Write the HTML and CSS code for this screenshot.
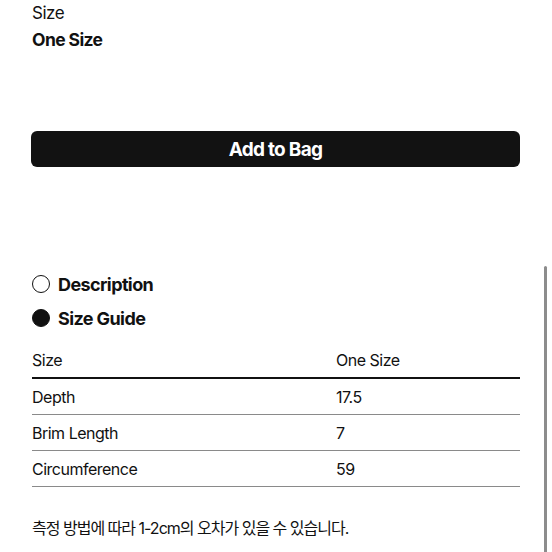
FILE: index.html
```html
<!DOCTYPE html>
<html lang="ko">
<head>
<meta charset="utf-8">
<link rel="stylesheet" href="styles.css">
</head>
<body>
<div class="page">
  <div class="size-block">
    <div class="size-label">Size</div>
    <div class="size-value">One Size</div>
  </div>
  <button class="bag-btn">Add to Bag</button>
  <div class="tabs">
    <div class="tab"><span class="radio"></span><span class="tab-text">Description</span></div>
    <div class="tab"><span class="radio radio-on"></span><span class="tab-text">Size Guide</span></div>
  </div>
  <table class="guide">
    <thead>
      <tr><th>Size</th><th>One Size</th></tr>
    </thead>
    <tbody>
      <tr><td>Depth</td><td>17.5</td></tr>
      <tr><td>Brim Length</td><td>7</td></tr>
      <tr><td>Circumference</td><td>59</td></tr>
    </tbody>
  </table>
  <p class="note">측정 방법에 따라 1-2cm의 오차가 있을 수 있습니다.</p>
</div>
<div class="scrollbar"></div>
</body>
</html>
```
FILE: styles.css
```css
html, body {
  margin: 0;
  padding: 0;
  background: #fff;
}
body {
  font-family: Inter, "Noto Sans CJK KR", sans-serif;
  color: #111;
  width: 552px;
  height: 552px;
  overflow: hidden;
  position: relative;
}
.page {
  padding: 0 32px;
  width: 488px;
}
.size-block {
  padding-top: 1px;
}
.size-label {
  font-size: 17px;
  line-height: 24px;
  letter-spacing: -0.5px;
}
.size-value {
  font-size: 17.5px;
  font-weight: 700;
  line-height: 24px;
  margin-top: 3px;
  letter-spacing: -0.6px;
}
.bag-btn {
  display: block;
  width: 489px;
  height: 36px;
  margin: 79px 0 0 -1px;
  border: none;
  border-radius: 6px;
  background: #121212;
  color: #fff;
  font-family: Inter, sans-serif;
  font-size: 19px;
  font-weight: 700;
  letter-spacing: -0.7px;
  padding: 0;
}
.tabs {
  margin-top: 105px;
  display: flex;
  flex-direction: column;
  gap: 10px;
}
.tab {
  display: flex;
  align-items: center;
  gap: 8px;
  height: 24px;
}
.radio {
  width: 16px;
  height: 16px;
  border: 1.5px solid #111;
  border-radius: 50%;
  box-sizing: content-box;
}
.radio-on {
  background: #111;
}
.tab-text {
  font-size: 18px;
  font-weight: 700;
  letter-spacing: -0.6px;
}
.guide {
  width: 488px;
  border-collapse: collapse;
  margin-top: 12px;
  font-size: 16px;
  letter-spacing: -0.5px;
}
.guide th, .guide td {
  text-align: left;
  font-weight: 400;
  padding: 0;
  height: 35px;
  vertical-align: middle;
}
.guide th:first-child, .guide td:first-child {
  width: 304px;
}
.guide thead tr {
  border-bottom: 2px solid #111;
}
.guide tbody tr {
  border-bottom: 1px solid #8a8a8a;
}
.note {
  margin: 28px 0 0;
  font-size: 16px;
  letter-spacing: -1px;
}
.scrollbar {
  position: absolute;
  left: 544px;
  top: 266px;
  width: 3px;
  height: 290px;
  border-radius: 2px;
  background: #8c8c8c;
}
```
